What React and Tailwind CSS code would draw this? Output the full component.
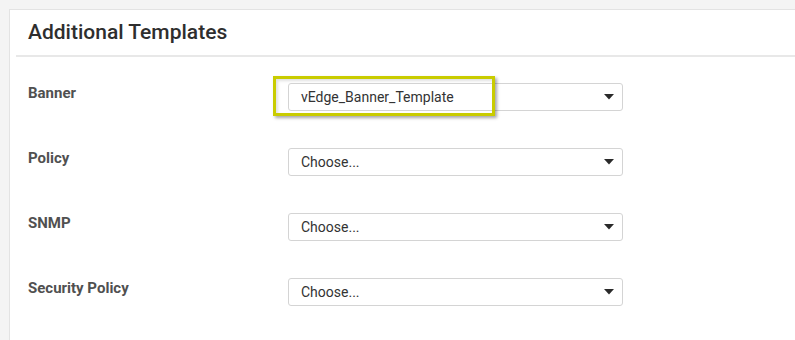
const rows = [
  { label: "Banner", value: "vEdge_Banner_Template", highlight: true },
  { label: "Policy", value: "Choose..." },
  { label: "SNMP", value: "Choose..." },
  { label: "Security Policy", value: "Choose..." },
];

function Caret() {
  return (
    <svg width="10" height="6" viewBox="0 0 10 6" className="shrink-0">
      <path d="M0 0 L10 0 L5 5.5 Z" fill="#2a2a2a" />
    </svg>
  );
}

function SelectBox({ value }) {
  return (
    <div className="w-[335px] h-[28px] border border-[#d4d4d4] rounded-[3px] bg-white flex items-center justify-between pl-[12px] pr-[8px] text-[14px] text-[#333]">
      <span>{value}</span>
      <Caret />
    </div>
  );
}

export default function App() {
  return (
    <div className="w-[795px] h-[340px] bg-[#f4f4f4] pl-[9px] pt-[9px] overflow-hidden" style={{ fontFamily: "Roboto, 'Noto Sans', sans-serif" }}>
      <div className="bg-white border-l border-t border-[#e3e3e3] h-[400px] w-[820px]">
        <div className="h-[47px] flex items-center pl-[18px] ml-[6px] border-b-2 border-[#e8e8e8]">
          <h1 className="text-[21px] font-medium text-[#2e2e2e] -ml-[6px]">Additional Templates</h1>
        </div>
        <div className="pl-[18px] pt-[26px] flex flex-col gap-[37px]">
          {rows.map((r) => (
            <div key={r.label} className="flex items-start h-[28px]">
              <div className="w-[260px] text-[15px] font-bold text-[#505050] leading-[18px] mt-[1px]">{r.label}</div>
              {r.highlight ? (
                <div className="relative">
                  <SelectBox value={r.value} />
                  <div className="absolute left-[-15px] top-[-7px] w-[222px] h-[40px] border-[3px] border-[#c9cc00] shadow-[2px_2px_3px_rgba(0,0,0,0.35),inset_2px_2px_3px_rgba(0,0,0,0.12)]" />
                </div>
              ) : (
                <SelectBox value={r.value} />
              )}
            </div>
          ))}
        </div>
      </div>
    </div>
  );
}
